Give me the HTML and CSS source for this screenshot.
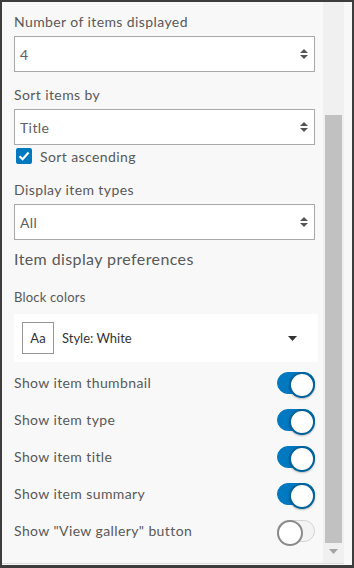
FILE: index.html
```html
<!DOCTYPE html>
<html lang="en">
<head>
  <meta charset="UTF-8">
  <title>Gallery settings</title>
  <link rel="stylesheet" href="styles.css">
</head>
<body>
  <div class="frame">
    <div class="panel">
      <div class="content">
        <div class="label">Number of items displayed</div>
        <div class="select">
          <span>4</span>
          <svg class="spin" width="8" height="10" viewBox="0 0 8 10"><path d="M0 4 4 0 8 4Z M0 6 8 6 4 10Z"/></svg>
        </div>

        <div class="label gap">Sort items by</div>
        <div class="select">
          <span>Title</span>
          <svg class="spin" width="8" height="10" viewBox="0 0 8 10"><path d="M0 4 4 0 8 4Z M0 6 8 6 4 10Z"/></svg>
        </div>
        <label class="check">
          <span class="box">
            <svg width="16" height="16" viewBox="0 0 16 16"><path d="M3.5 8.2 6.6 11.2 12.6 4.6" fill="none" stroke="#fff" stroke-width="2.2"/></svg>
          </span>
          Sort ascending
        </label>

        <div class="label gap-check">Display item types</div>
        <div class="select">
          <span>All</span>
          <svg class="spin" width="8" height="10" viewBox="0 0 8 10"><path d="M0 4 4 0 8 4Z M0 6 8 6 4 10Z"/></svg>
        </div>

        <div class="heading">Item display preferences</div>
        <div class="sub">Block colors</div>
        <div class="style-card">
          <span class="swatch">Aa</span>
          <span class="style-name"><b>Style:</b> White</span>
          <svg class="caret" width="9" height="5" viewBox="0 0 9 5"><path d="M0 0 9 0 4.5 5Z"/></svg>
        </div>

        <div class="toggles">
          <div class="row"><span>Show item thumbnail</span><span class="toggle on"></span></div>
          <div class="row"><span>Show item type</span><span class="toggle on"></span></div>
          <div class="row"><span>Show item title</span><span class="toggle on"></span></div>
          <div class="row"><span>Show item summary</span><span class="toggle on"></span></div>
          <div class="row"><span>Show "View gallery" button</span><span class="toggle"></span></div>
        </div>
      </div>

      <div class="scrollbar">
        <div class="thumb"></div>
        <svg class="arrow" width="9" height="5" viewBox="0 0 9 5"><path d="M0 0 9 0 4.5 5Z"/></svg>
      </div>
    </div>
  </div>
</body>
</html>
```

FILE: styles.css
```css
* {
  box-sizing: border-box;
}

body {
  margin: 0;
  font-family: 'Lato', sans-serif;
  letter-spacing: 0.4px;
  color: #585858;
}

.frame {
  width: 354px;
  height: 568px;
  border: 2px solid #3d3d3d;
  border-bottom-width: 3px;
  background: #f8f8f8;
  padding-right: 8px;
}

.panel {
  display: flex;
  height: 562px;
  border-bottom: 1px solid #dcdcdc;
}

.content {
  flex: 1;
  padding: 10px 8px 0 12px;
  overflow: hidden;
}

.label {
  font-size: 14px;
  line-height: 20px;
  margin-bottom: 4px;
}

.label.gap {
  margin-top: 13px;
}

.label.gap-check {
  margin-top: 15px;
}

.select {
  display: flex;
  align-items: center;
  justify-content: space-between;
  height: 36px;
  padding: 0 5px;
  background: #fff;
  border: 1px solid #a9a9a9;
  font-size: 14px;
  color: #606060;
}

.spin {
  fill: #555;
  margin-right: 1px;
}

.check {
  display: flex;
  align-items: center;
  gap: 8px;
  height: 18px;
  margin-top: 2px;
  padding-left: 2px;
  font-size: 14px;
}

.box {
  display: flex;
  width: 16px;
  height: 16px;
  border-radius: 2px;
  background: #0079c1;
}

.heading {
  font-size: 16px;
  line-height: 22px;
  margin-top: 8px;
}

.sub {
  font-size: 13px;
  line-height: 20px;
  margin-top: 17px;
  letter-spacing: 0.2px;
}

.style-card {
  display: flex;
  align-items: center;
  height: 48px;
  margin-top: 7px;
  margin-right: -3px;
  padding: 0 21px 0 8px;
  background: #fff;
  font-size: 13px;
  letter-spacing: 0;
}

.swatch {
  display: flex;
  align-items: center;
  justify-content: center;
  width: 32px;
  height: 32px;
  border: 1px solid #959595;
  font-size: 13px;
  color: #333;
}

.style-name {
  flex: 1;
  margin-left: 8px;
  color: #333;
}

.style-name b {
  font-weight: inherit;
}

.caret {
  fill: #333;
}

.toggles {
  margin-top: 2px;
}

.row {
  display: flex;
  align-items: center;
  justify-content: space-between;
  height: 37px;
  font-size: 14px;
}

.toggle {
  position: relative;
  width: 38px;
  height: 22px;
  border-radius: 11px;
  background: #f3f3f3;
  border: 1px solid #d4d4d4;
}

.toggle::after {
  content: "";
  position: absolute;
  top: -1px;
  left: -1px;
  width: 22px;
  height: 22px;
  border-radius: 50%;
  background: #fff;
  border: 2px solid #8a8a8a;
}

.toggle.on {
  background: #0079c1;
  border-color: #0079c1;
}

.toggle.on::after {
  left: auto;
  right: -1px;
  border-color: #00619b;
  box-shadow: 0 1px 2px rgba(0, 0, 0, 0.25);
}

.scrollbar {
  display: flex;
  flex-direction: column;
  align-items: center;
  width: 21px;
  background: #f0f0f0;
  padding-top: 113px;
}

.thumb {
  width: 17px;
  height: 428px;
  background: #c1c1c1;
}

.arrow {
  margin-top: 6px;
  fill: #a3a3a3;
}
```
